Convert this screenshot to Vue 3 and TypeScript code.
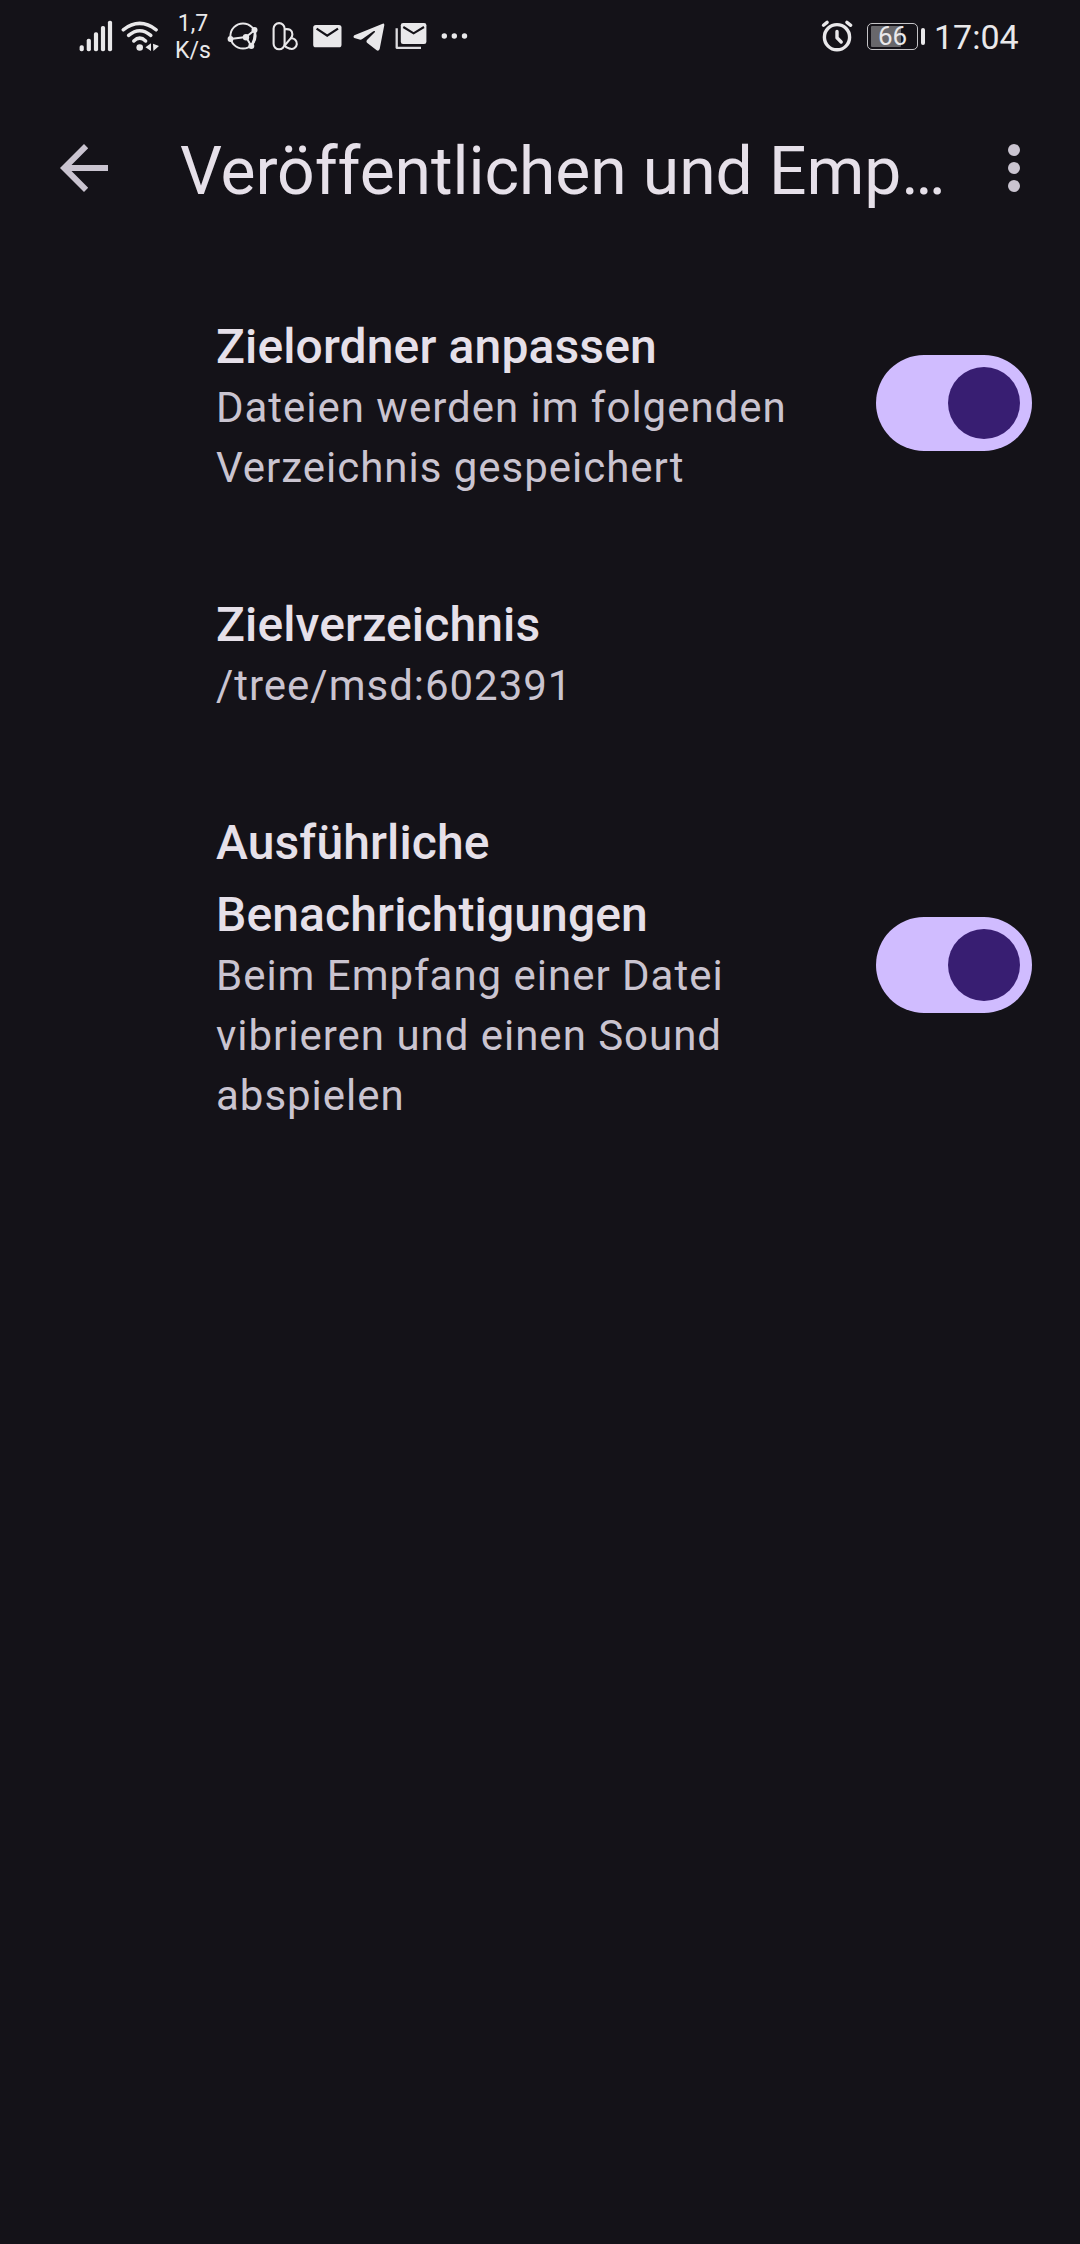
<script setup lang="ts">
import { ref } from 'vue'

interface Setting {
  title: string
  summary: string
  checked?: boolean
}

const settings = ref<Setting[]>([
  {
    title: 'Zielordner anpassen',
    summary: 'Dateien werden im folgenden Verzeichnis gespeichert',
    checked: true,
  },
  { title: 'Zielverzeichnis', summary: '/tree/msd:602391' },
  {
    title: 'Ausführliche Benachrichtigungen',
    summary: 'Beim Empfang einer Datei vibrieren und einen Sound abspielen',
    checked: true,
  },
])

const signalBars = [
  { x: 3.7, top: 45.3 },
  { x: 10.8, top: 38.7 },
  { x: 18, top: 32.3 },
  { x: 25, top: 26 },
  { x: 32, top: 20.7 },
]

function toggle(item: Setting) {
  if (item.checked !== undefined) item.checked = !item.checked
}
</script>

<template>
  <div class="screen">
    <header class="status">
      <svg class="signal" width="36" height="72" viewBox="0 0 36 72">
        <rect v-for="b in signalBars" :key="b.x" :x="b.x - 2.1" :y="b.top" width="4.2" :height="51.3 - b.top" rx="1.8" fill="#e9e8ea" />
      </svg>
      <svg class="wifi" width="42" height="72" viewBox="0 0 42 72">
        <g fill="none" stroke="#e9e8ea" stroke-width="3.5" stroke-linecap="round">
          <path d="M3.2 29.8Q19.7 17 36.2 29.8" />
          <path d="M8.6 35.4Q19.7 26 30.8 35.4" />
          <path d="M13.8 41Q19.7 35.4 25.6 41" />
        </g>
        <circle cx="19.7" cy="47.5" r="3.3" fill="#e9e8ea" />
        <path d="M25.5 47.3L31 43.2V51ZM33 43.8L39 46L33.4 51Z" fill="#e9e8ea" />
      </svg>
      <div class="speed"><span>1,7</span><span>K/s</span></div>
      <svg class="globe" width="34" height="72" viewBox="0 0 34 72">
        <g fill="none" stroke="#e9e8ea" stroke-width="2">
          <circle cx="17" cy="36" r="12.6" />
          <path d="M4.3 39L20 37L28.7 30M20 37L25.3 46M28.7 30Q29.5 38 25.3 46" />
        </g>
        <g fill="#e9e8ea">
          <circle cx="4.5" cy="39" r="2.9" />
          <circle cx="28.5" cy="30" r="3" />
          <circle cx="25.3" cy="46" r="3" />
          <circle cx="20" cy="37.2" r="3.2" />
        </g>
      </svg>
      <svg class="pills" width="30" height="72" viewBox="0 0 30 72">
        <g fill="none" stroke="#e9e8ea" stroke-width="2.1" stroke-linejoin="round">
          <rect x="3.6" y="23.1" width="11" height="26.2" rx="5.5" />
          <path d="M14.6 29.3Q22 28.2 22.4 34.2Q22.4 36.5 20.7 38.4L14.6 45.5" />
          <path d="M20.7 38.4A5.3 5.3 0 1 1 19.7 48.6Q16.2 48 14.4 45.3" />
        </g>
      </svg>
      <svg class="mail" width="29" height="72" viewBox="0 0 29 72">
        <rect x="0.2" y="25" width="28.3" height="22.3" rx="2.6" fill="#e9e8ea" />
        <path d="M3.6 28.6L14.2 35.6L25 28.6" fill="none" stroke="#141218" stroke-width="2.3" />
      </svg>
      <svg class="plane" width="32" height="72" viewBox="0 0 96 216">
        <path d="M89 71Q94 70 94 75L80 147Q77 154 71 151L44 130Q38 126 42 120L66 96Q67 91 61 94L28 117Q23 121 17 118L4 114Q-1 110 4 106Z" fill="#e9e8ea" />
      </svg>
      <svg class="mails" width="32" height="72" viewBox="0 0 32 72">
        <rect x="5.8" y="23" width="25.6" height="21" rx="2.3" fill="#e9e8ea" />
        <path d="M8.3 27L18.6 33.3L29 27" fill="none" stroke="#141218" stroke-width="2.1" />
        <path d="M1.7 28.3V47.8H26" fill="none" stroke="#dddcdf" stroke-width="2.3" stroke-linejoin="round" />
      </svg>
      <svg class="more" width="28" height="72" viewBox="0 0 28 72">
        <g fill="#e9e8ea"><circle cx="4.3" cy="36" r="2.7" /><circle cx="14.3" cy="36" r="2.7" /><circle cx="24.5" cy="36" r="2.7" /></g>
      </svg>
      <svg class="alarm" width="36" height="72" viewBox="0 0 36 72">
        <g fill="none" stroke="#e9e8ea" stroke-width="3.4" stroke-linecap="round" stroke-linejoin="round">
          <circle cx="17" cy="37.2" r="12.6" />
          <path d="M17 31.5V37.7L21.2 42" />
          <path d="M3.5 25.3L7.1 22.4M26.9 22.4L30.7 25.3" />
        </g>
      </svg>
      <div class="battery">
        <div class="cell"><div class="level"></div><span>66</span></div>
        <div class="cap"></div>
      </div>
      <time class="clock">17:04</time>
    </header>

    <nav class="bar">
      <svg class="back" width="48" height="48" viewBox="0 0 48 48">
        <path d="M48 21H11.5L28.2 4.2L24 0L0 24L24 48L28.2 43.8L11.5 27H48Z" fill="#cac4d0" />
      </svg>
      <h1>Veröffentlichen und Emp…</h1>
      <svg class="menu" width="12" height="48" viewBox="0 0 12 48">
        <g fill="#cac4d0"><circle cx="6" cy="6" r="6" /><circle cx="6" cy="24" r="6" /><circle cx="6" cy="42" r="6" /></g>
      </svg>
    </nav>

    <main class="list">
      <section v-for="item in settings" :key="item.title" class="item" @click="toggle(item)">
        <div class="text">
          <h2>{{ item.title }}</h2>
          <p>{{ item.summary }}</p>
        </div>
        <div v-if="item.checked !== undefined" class="switch" :class="{ off: !item.checked }">
          <div class="thumb"></div>
        </div>
      </section>
    </main>
  </div>
</template>

<style>
html,
body {
  margin: 0;
  background: #141218;
}
</style>

<style scoped>
.screen {
  width: 1080px;
  height: 2244px;
  overflow: hidden;
  background: #141218;
  color: #e6e0e9;
  font-family: Roboto, "Noto Sans", sans-serif;
}
svg {
  display: block;
  flex: none;
}
.status {
  display: flex;
  height: 72px;
  padding-left: 78px;
  color: #e9e8ea;
}
.wifi {
  margin-left: 6px;
}
.speed {
  display: flex;
  flex-direction: column;
  width: 40px;
  margin-left: 11px;
  padding-top: 10px;
  box-sizing: border-box;
  align-items: center;
  font-size: 23px;
  line-height: 27px;
}
.globe {
  margin-left: 13px;
}
.pills {
  margin-left: 10px;
}
.mail {
  margin-left: 13px;
}
.plane {
  margin-left: 11px;
}
.mails {
  margin-left: 10px;
}
.more {
  margin-left: 13px;
}
.alarm {
  margin-left: 352px;
}
.battery {
  display: flex;
  align-items: center;
  align-self: flex-start;
  gap: 3px;
  height: 27px;
  margin: 23px 0 0 11px;
}
.cell {
  position: relative;
  width: 51px;
  height: 27px;
  box-sizing: border-box;
  border: 1.5px solid #c4c3c6;
  border-radius: 5px;
  font-size: 26px;
  line-height: 25px;
  text-align: center;
}
.level {
  position: absolute;
  left: 3px;
  top: 2px;
  width: 30px;
  height: 21px;
  border-radius: 1px;
  background: #68676b;
}
.cell span {
  position: relative;
}
.cap {
  width: 4px;
  height: 17px;
  border-radius: 2px;
  background: #e9e8ea;
}
.clock {
  margin-left: 9px;
  font-size: 34px;
  line-height: 74px;
}
.bar {
  display: flex;
  align-items: center;
  height: 192px;
  box-sizing: border-box;
  padding: 0 60px 0 60px;
}
.bar h1 {
  flex: 1;
  margin: 7px 0 0 72px;
  font-size: 66px;
  font-weight: 400;
  line-height: 84px;
  letter-spacing: -0.07px;
  white-space: nowrap;
}
.list {
  display: flex;
  flex-direction: column;
  gap: 91px;
  padding: 47px 48px 0 216px;
}
.item {
  display: flex;
  align-items: center;
  justify-content: space-between;
}
.text {
  width: 600px;
}
.item h2 {
  margin: 0 0 -5px;
  font-size: 48px;
  font-weight: 500;
  line-height: 72px;
  letter-spacing: 0.12px;
}
.item p {
  margin: 0;
  color: #cac4d0;
  font-size: 42px;
  line-height: 60px;
  letter-spacing: 0.98px;
}
.switch {
  display: flex;
  align-items: center;
  justify-content: flex-end;
  width: 156px;
  height: 96px;
  box-sizing: border-box;
  margin-bottom: 3px;
  padding: 0 12px;
  border-radius: 48px;
  background: #d0bcff;
}
.switch.off {
  justify-content: flex-start;
  background: #36343b;
}
.thumb {
  width: 72px;
  height: 72px;
  border-radius: 50%;
  background: #381e72;
}
</style>
